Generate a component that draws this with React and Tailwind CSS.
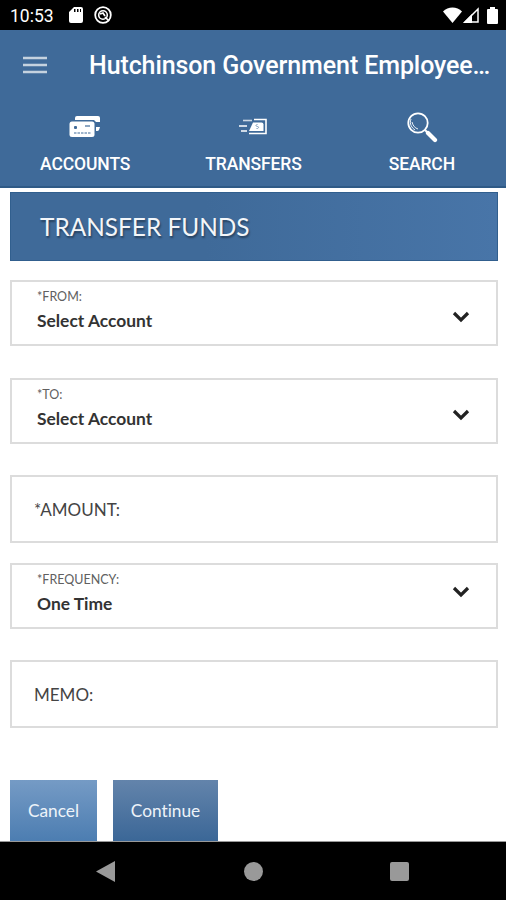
import React from 'react';

function CardsIcon() {
  return (
    <svg width="32" height="24" viewBox="0 0 32 24">
      <path d="M8 1h21a2 2 0 0 1 2 2v4h-4l-2-2H6V3a2 2 0 0 1 2-2z" fill="#fff" />
      <path d="M27 12h4l-1 3a2 2 0 0 1-2 1h-1z" fill="#fff" />
      <rect x="0.500" y="6.500" width="25" height="15.500" rx="2.500" fill="#fff" />
      <rect x="5" y="11" width="3" height="3" rx="1" fill="#3f6a99" />
      <path d="M16 11h5" stroke="#3f6a99" strokeWidth="1.200" />
      <path d="M5 18h17" stroke="#3f6a99" strokeWidth="1" strokeDasharray="2.500 1" />
    </svg>
  );
}

function TransferIcon() {
  return (
    <svg width="30" height="18" viewBox="0 0 30 18" fill="none" stroke="#fff" strokeWidth="1.600">
      <path d="M5 2.500h9" stroke="#cbd8e5" />
      <path d="M1 8h8M3 13h6" />
      <path d="M16 1.500h12v14H11" />
      <path d="M15 4.500h8.500a2 2 0 0 1 2 2v6.500H11z" fill="#fff" stroke="none" />
      <path d="M19.500 6.500c-2 0-2 2 0 2s1 2.500-1 2" stroke="#7e9cbb" strokeWidth="1" />
    </svg>
  );
}

function SearchIcon() {
  return (
    <svg width="32" height="32" viewBox="0 0 32 32" fill="none" stroke="#fff">
      <circle cx="12" cy="12" r="9.700" strokeWidth="1.800" />
      <path d="M5 8c-2 5 1 9 4 11M6 11c1 4 3 6 6 7" strokeWidth="0.900" />
      <path d="M19 19l3 3" strokeWidth="2" />
      <path d="M22 22l7 7" strokeWidth="4.300" strokeLinecap="round" />
    </svg>
  );
}

function ChevronIcon() {
  return (
    <svg width="18" height="12" viewBox="0 0 18 12" fill="none" stroke="#222" strokeWidth="3.200">
      <path d="M2 2l7 7 7-7" />
    </svg>
  );
}

function SelectField({ label, value, chevronClass = "pt-[29px]" }) {
  return (
    <div className="flex h-[66px] justify-between border-2 border-[#dcdcdc] pl-[25px] pr-[26px]">
      <div className="flex flex-col pt-[6px]">
        <span className="text-[12.500px] leading-[17px] text-[#606060]">{label}</span>
        <span className="mt-[6px] text-[17.400px] leading-[20px] font-bold text-[#333]">{value}</span>
      </div>
      <div className={chevronClass}>
        <ChevronIcon />
      </div>
    </div>
  );
}

function TextField({ label }) {
  return (
    <div className="flex h-[68px] items-center border-2 border-[#dcdcdc] pt-px pl-[22px] text-[17px] text-[#444]">
      {label}
    </div>
  );
}

function App() {
  return (
    <div className="flex h-[900px] w-[506px] flex-col overflow-hidden bg-white font-['Lato',sans-serif]">

      {/* Status Bar */}
      <div className="flex h-[30px] shrink-0 items-center bg-black pl-[10px] pr-[8px] font-['Roboto',sans-serif] text-white">
        <span className="w-[59px] pt-[2px] text-[17.500px]">10:53</span>
        <svg width="14" height="16" viewBox="0 0 14 16" fill="#fff">
          <path fillRule="evenodd" d="M5 0h7a2 2 0 0 1 2 2v12a2 2 0 0 1-2 2H2a2 2 0 0 1-2-2V5zM5 2v3h1.500V2zM8 2v3h1.500V2zM11 2v3h1V2z" />
        </svg>
        <svg className="ml-[11px]" width="18" height="18" viewBox="0 0 18 18" fill="none" stroke="#fff">
          <circle cx="9" cy="9" r="7.800" strokeWidth="1.800" />
          <circle cx="9" cy="9" r="4.300" strokeWidth="1.600" />
          <path d="M6 8l3-1 2 3M11 11l4 4" strokeWidth="1.700" />
        </svg>
        <div className="ml-auto flex items-center">
          <svg width="19" height="16" viewBox="0 0 19 16" fill="#fff">
            <path d="M0 4.500C5-1 14-1 19 4.500L9.500 16z" />
          </svg>
          <svg className="ml-px" width="16" height="16" viewBox="0 0 16 16">
            <path d="M2 15L15 2v13z" fill="none" stroke="#fff" strokeWidth="1.500" />
            <path d="M0 16L9 7v9z" fill="#fff" />
          </svg>
          <svg className="ml-[8px]" width="11" height="17" viewBox="0 0 11 17" fill="#fff">
            <path d="M3 0h5v2h2a1 1 0 0 1 1 1v13a1 1 0 0 1-1 1H1a1 1 0 0 1-1-1V3a1 1 0 0 1 1-1h2z" />
          </svg>
        </div>
      </div>

      {/* Header */}
      <div className="h-[158px] shrink-0 border-b-2 border-[#2f5a86] bg-[#3f6a99] font-['Roboto',sans-serif] font-medium text-white">
        <div className="flex h-[71px] items-center pl-[23px]">
          <svg className="-mt-px" width="24" height="18" viewBox="0 0 24 18" stroke="#c5d2df" strokeWidth="2.500">
            <path d="M0 2h24M0 9h24M0 16h24" />
          </svg>
          <h1 className="ml-[42px] text-[25px] tracking-[-0.100px] whitespace-nowrap">Hutchinson Government Employee…</h1>
        </div>
        <div className="grid grid-cols-3 pl-px text-center text-[17.500px] tracking-[-0.100px]">
          <div className="flex flex-col items-center">
            <div className="flex h-[51px] items-center pt-px"><CardsIcon /></div>
            <span className="leading-[24px]">ACCOUNTS</span>
          </div>
          <div className="flex flex-col items-center">
            <div className="flex h-[51px] items-center pt-px"><TransferIcon /></div>
            <span className="leading-[24px]">TRANSFERS</span>
          </div>
          <div className="flex flex-col items-center">
            <div className="flex h-[51px] items-center"><SearchIcon /></div>
            <span className="leading-[24px]">SEARCH</span>
          </div>
        </div>
      </div>

      {/* Transfer Form */}
      <div className="flex h-[653px] shrink-0 flex-col pt-[4px] pr-[8px] pl-[10px]">
        <h2 className="flex h-[69px] items-center border border-[#315f8e] bg-linear-to-r from-[#3f6a99] from-40% to-[#4875a8] pt-px pl-[29px] text-[24.400px] text-[#f3f6f9] text-shadow-[1px_2px_2px_rgb(0_0_0/0.4)]">
          TRANSFER FUNDS
        </h2>
        <div className="mt-[19px] flex flex-col">
          <SelectField label="*FROM:" value="Select Account" />
          <div className="mt-[32px]"><SelectField label="*TO:" value="Select Account" /></div>
          <div className="mt-[31px]"><TextField label="*AMOUNT:" /></div>
          <div className="mt-[20px]"><SelectField label="*FREQUENCY:" value="One Time" chevronClass="pt-[21px]" /></div>
          <div className="mt-[31px]"><TextField label="MEMO:" /></div>
        </div>
        <div className="mt-[52px] flex gap-4 text-[17.300px] text-[#edf3f9] [font-variant-ligatures:none]">
          <button className="h-[61px] w-[87px] bg-linear-to-b from-[#759bc5] to-[#4c7db1] [font-variant-ligatures:none]">Cancel</button>
          <button className="h-[61px] w-[105px] bg-linear-to-b from-[#6384ab] to-[#3b6797] [font-variant-ligatures:none]">Continue</button>
        </div>
      </div>

      {/* Navigation Bar */}
      <div className="flex h-[59px] shrink-0 items-center border-t border-[#999] bg-black">
        <svg className="ml-[96px]" width="19" height="21" viewBox="0 0 19 21" fill="#999">
          <path d="M0 10.500L19 0v21z" />
        </svg>
        <div className="ml-[129px] size-[19px] rounded-full bg-[#999]"></div>
        <div className="ml-[127px] size-[19px] rounded-[2px] bg-[#999]"></div>
      </div>

    </div>
  );
}

export default App;
